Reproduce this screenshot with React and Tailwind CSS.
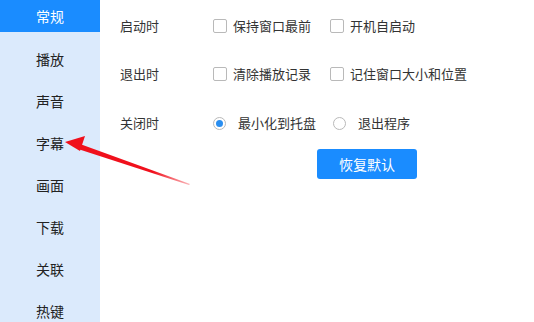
import React from "react";

const font = { fontFamily: '"Microsoft YaHei", "Noto Sans CJK SC", sans-serif' };

const navItems = ["播放", "声音", "字幕", "画面", "下载", "关联", "热键"];

function Checkbox({ label }) {
  return (
    <label className="flex items-center gap-[6px]">
      <span className="w-[14px] h-[14px] rounded-[2px] border border-[#b9b9b9] bg-white" />
      <span>{label}</span>
    </label>
  );
}

function Radio({ label, checked }) {
  return (
    <label className="flex items-center gap-[12px]">
      <span className="w-[13px] h-[13px] rounded-full border border-[#b9b9b9] bg-white flex items-center justify-center">
        {checked && <span className="w-[7px] h-[7px] rounded-full bg-[#2a8ef0]" />}
      </span>
      <span>{label}</span>
    </label>
  );
}

export default function App() {
  return (
    <div className="relative flex w-[534px] h-[322px] bg-white overflow-hidden text-[13px] text-[#333]" style={font}>
      {/* Sidebar */}
      <aside className="w-[100px] shrink-0 bg-[#dbeafc] flex flex-col text-[14px] text-[#222]">
        <div className="h-[32px] shrink-0 bg-[#1a8cff] text-white flex items-center justify-center">常规</div>
        <div className="h-[6px] shrink-0" />
        {navItems.map((t) => (
          <div key={t} className="h-[42px] shrink-0 flex items-center justify-center">
            {t}
          </div>
        ))}
      </aside>

      {/* Content */}
      <main className="flex-1 pl-[20px] pt-[16px] flex flex-col">
        <div className="flex items-center h-[20px]">
          <div className="w-[93px]">启动时</div>
          <div className="w-[117px]">
            <Checkbox label="保持窗口最前" />
          </div>
          <Checkbox label="开机自启动" />
        </div>
        <div className="flex items-center h-[20px] mt-[28px]">
          <div className="w-[93px]">退出时</div>
          <div className="w-[117px]">
            <Checkbox label="清除播放记录" />
          </div>
          <Checkbox label="记住窗口大小和位置" />
        </div>
        <div className="flex items-center h-[20px] mt-[29px]">
          <div className="w-[93px]">关闭时</div>
          <div className="w-[120px]">
            <Radio label="最小化到托盘" checked />
          </div>
          <Radio label="退出程序" />
        </div>
        <div className="mt-[16px] ml-[197px]">
          <button className="w-[100px] h-[30px] rounded-[3px] bg-[#1a8cff] text-white text-[14px]">恢复默认</button>
        </div>
      </main>

      {/* Annotation arrow */}
      <svg className="absolute left-0 top-0 pointer-events-none" width="534" height="322">
        <defs>
          <linearGradient id="fade" x1="66" y1="142" x2="190" y2="184" gradientUnits="userSpaceOnUse">
            <stop offset="0" stopColor="#f0101c" />
            <stop offset="0.7" stopColor="#f0101c" />
            <stop offset="1" stopColor="#f0101c" stopOpacity="0.3" />
          </linearGradient>
        </defs>
        <polygon points="190,184 80,144 78,149 189,185" fill="url(#fade)" />
        <polygon points="65,142 85,136 80,151" fill="#f0101c" />
      </svg>
    </div>
  );
}
